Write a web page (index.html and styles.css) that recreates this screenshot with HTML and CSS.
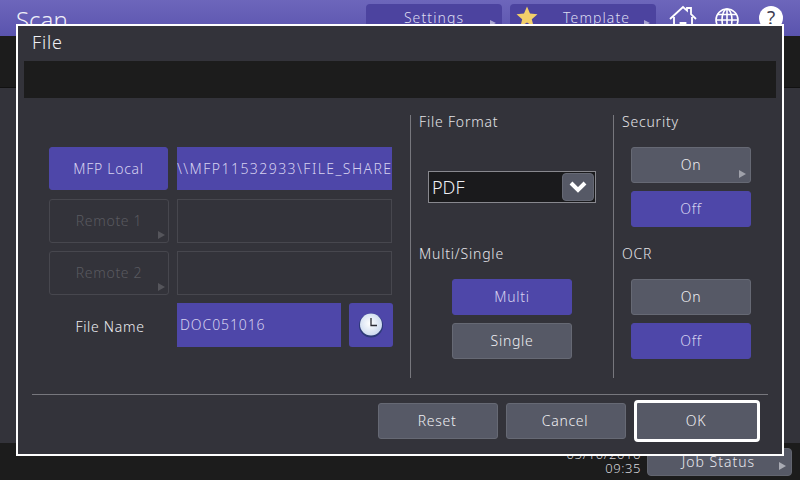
FILE: index.html
```html
<!DOCTYPE html>
<html lang="en">
<head>
<meta charset="utf-8">
<title>Scan - File</title>
<link rel="stylesheet" href="styles.css">
</head>
<body>
<div class="screen">
  <header class="topbar">
    <div class="app-title">Scan</div>
    <div class="top-actions">
      <div class="top-btn top-btn-settings">Settings</div>
      <div class="top-btn top-btn-template">
        <svg class="star" viewBox="0 0 24 24" width="24" height="24"><path d="M12 1.5l3 7 7.5.7-5.700 5 1.800 7.300L12 17.600 5.400 21.500l1.800-7.300-5.700-5 7.500-.7z" fill="#f2cf6a"/></svg>
        <span>Template</span>
      </div>
      <svg class="top-icon home" viewBox="0 0 30 30" width="30" height="30" fill="none" stroke="#fff" stroke-width="1.800"><path d="M2 15L15 3l4 3.600V4h4v6.200L28 15"/><path d="M6 13v14h6.500v-8h5v8H24V13"/></svg>
      <svg class="top-icon globe" viewBox="0 0 26 26" width="26" height="26" fill="none" stroke="#fff" stroke-width="1.600"><circle cx="13" cy="13" r="11"/><ellipse cx="13" cy="13" rx="5" ry="11"/><path d="M13 2v22M2 13h22M3.500 7.500h19M3.500 18.500h19"/></svg>
      <div class="help">?</div>
    </div>
  </header>
  <div class="band"></div>
  <main class="backdrop"></main>
  <footer class="bottombar">
    <div class="clock-text">05/10/2016<br>09:35</div>
    <div class="job-btn">Job Status</div>
  </footer>

  <section class="dialog">
    <h1 class="dialog-title">File</h1>
    <div class="message"></div>
    <div class="columns">
      <div class="col-dest">
        <div class="btn btn-on btn-row">MFP Local</div>
        <div class="field field-on path">\\MFP11532933\FILE_SHARE</div>
        <div class="btn btn-off btn-row arrow-dim">Remote 1</div>
        <div class="field field-empty"></div>
        <div class="btn btn-off btn-row arrow-dim">Remote 2</div>
        <div class="field field-empty"></div>
        <div class="name-label">File Name</div>
        <div class="name-group">
          <div class="field field-on name">DOC051016</div>
          <div class="clock-btn">
            <svg viewBox="0 0 26 26" width="26" height="26"><defs><radialGradient id="face" cx="45%" cy="45%" r="60%"><stop offset="0" stop-color="#ffffff"/><stop offset="1" stop-color="#c9d8ee"/></radialGradient></defs><circle cx="13" cy="13.500" r="12" fill="#2d3a78"/><circle cx="13" cy="12.500" r="11" fill="url(#face)"/><path d="M13 6v7.500h6" fill="none" stroke="#2a2b34" stroke-width="1.300"/></svg>
          </div>
        </div>
      </div>
      <div class="col-mid">
        <div class="group group-format">
          <div class="label">File Format</div>
          <div class="select">
            <span>PDF</span>
            <div class="select-btn">
              <svg viewBox="0 0 20 14" width="20" height="14" fill="none" stroke="#fff" stroke-width="4"><path d="M3 3l7 7 7-7"/></svg>
            </div>
          </div>
        </div>
        <div class="group">
          <div class="label">Multi/Single</div>
          <div class="stack">
            <div class="btn btn-on">Multi</div>
            <div class="btn btn-grey">Single</div>
          </div>
        </div>
      </div>
      <div class="col-right">
        <div class="group">
          <div class="label">Security</div>
          <div class="stack">
            <div class="btn btn-grey arrow">On</div>
            <div class="btn btn-on">Off</div>
          </div>
        </div>
        <div class="group">
          <div class="label">OCR</div>
          <div class="stack">
            <div class="btn btn-grey">On</div>
            <div class="btn btn-on">Off</div>
          </div>
        </div>
      </div>
    </div>
    <div class="dialog-footer">
      <div class="btn btn-grey">Reset</div>
      <div class="btn btn-grey">Cancel</div>
      <div class="btn btn-grey btn-ok">OK</div>
    </div>
  </section>
</div>
</body>
</html>
```

FILE: styles.css
```css
* { box-sizing: border-box; }
html, body { margin: 0; padding: 0; }
body {
  width: 800px;
  height: 480px;
  overflow: hidden;
  background: #1c1c1c;
  font-family: "Noto Sans", "Open Sans", sans-serif;
  font-weight: 300;
  color: #e8e8ee;
}
.screen {
  position: relative;
  width: 800px;
  height: 480px;
  overflow: hidden;
  display: flex;
  flex-direction: column;
}
.topbar {
  height: 36px;
  display: flex;
  justify-content: space-between;
  background: linear-gradient(#6d66bb, #5a54ae);
}
.app-title {
  margin: 3px 0 0 16px;
  font-size: 24px;
  line-height: 34px;
  font-weight: 300;
  color: #eeeef8;
}
.top-actions {
  display: flex;
  align-items: flex-start;
  padding-top: 4px;
  margin-right: 17px;
}
.top-btn {
  position: relative;
  height: 32px;
  border-radius: 4px;
  background: #4c439f;
  font-size: 14px;
  line-height: 28px;
  letter-spacing: 1.100px;
  color: #dcdcf0;
  text-align: center;
}
.top-btn::after {
  content: "";
  position: absolute;
  right: 6px;
  top: 16px;
  border-left: 6px solid #a9a6d2;
  border-top: 3.500px solid transparent;
  border-bottom: 3.500px solid transparent;
}
.top-btn-settings { width: 136px; margin-right: 8px; }
.top-btn-template {
  width: 146px;
  display: flex;
  padding-left: 5px;
  margin-right: 12px;
}
.top-btn-template span { margin-left: 24px; }
.star { margin-top: 1px; }
.top-icon { flex: none; }
.home { margin-top: 0; }
.globe { margin: 3px 0 0 16px; }
.help {
  width: 24px;
  height: 24px;
  margin: 2px 0 0 19px;
  border-radius: 50%;
  background: #fff;
  color: #3c3c50;
  font-size: 19px;
  font-weight: 400;
  line-height: 24px;
  text-align: center;
}
.band { height: 52px; background: #1c1c1c; border-bottom: 1px solid #111; }
.backdrop { flex: 1; background: #33333a; }
.bottombar {
  height: 37px;
  display: flex;
  justify-content: flex-end;
  background: #1c1c1c;
  padding: 5px 8px 0 0;
}
.clock-text {
  margin: -1px 6px 0 0;
  font-size: 13px;
  line-height: 14px;
  text-align: right;
  letter-spacing: .6px;
  color: #d8d8dc;
}
.job-btn {
  position: relative;
  width: 145px;
  height: 28px;
  border-radius: 4px;
  background: #565966;
  border: 1px solid #62656f;
  padding-right: 2px;
  font-size: 14px;
  line-height: 26px;
  letter-spacing: 1px;
  text-align: center;
  color: #e8e8ee;
}
.job-btn::after {
  content: "";
  position: absolute;
  right: 5px;
  top: 13px;
  border-left: 7px solid #a9abb4;
  border-top: 4px solid transparent;
  border-bottom: 4px solid transparent;
}

.dialog {
  position: absolute;
  left: 16px;
  top: 24px;
  width: 768px;
  height: 432px;
  border: 2px solid #fff;
  background: #33333a;
  display: flex;
  flex-direction: column;
}
.dialog-title {
  margin: 0;
  height: 35px;
  padding-left: 14px;
  font-size: 18px;
  line-height: 33px;
  font-weight: 300;
  letter-spacing: .8px;
  color: #f0f0f4;
}
.message {
  height: 37px;
  margin: 0 6px;
  background: #1c1c1c;
}
.columns {
  display: flex;
  height: 263px;
  margin-top: 17px;
}
.col-dest {
  width: 392px;
  padding: 32px 0 0 31px;
  display: grid;
  grid-template-columns: 119px 216px;
  grid-auto-rows: 44px;
  column-gap: 9px;
  row-gap: 8px;
  align-content: start;
}
.col-mid {
  width: 203px;
  border-left: 1px solid #77777d;
  padding-left: 8px;
}
.col-right {
  border-left: 1px solid #77777d;
  padding-left: 8px;
  flex: 1;
}
.group { height: 132px; }
.label {
  font-size: 14px;
  line-height: 14px;
  height: 12px;
  letter-spacing: .8px;
  color: #e4e4e8;
}
.stack {
  display: flex;
  flex-direction: column;
  gap: 8px;
  margin-top: 20px;
  margin-left: 9px;
}
.col-mid .stack { margin-left: 33px; }
.btn {
  position: relative;
  width: 120px;
  height: 36px;
  border-radius: 3px;
  font-size: 14px;
  line-height: 33px;
  letter-spacing: .7px;
  text-align: center;
  border: 1px solid transparent;
}
.btn-row { width: 119px; height: 43px; line-height: 41px; }
.btn-on { background: #4e47a9; border-color: #4e47a9; color: #d6d2f0; }
.btn-grey { background: #565966; border-color: #666974; color: #eeeef2; }
.btn-off { background: transparent; border-color: #47474e; color: #5a5a60; width: 120px; height: 44px; line-height: 42px; }
.arrow::after, .arrow-dim::after {
  content: "";
  position: absolute;
  right: 4px;
  bottom: 4px;
  border-left: 7px solid #9fa1aa;
  border-top: 4px solid transparent;
  border-bottom: 4px solid transparent;
}
.arrow-dim::after { border-left-color: #55555b; right: 3px; bottom: 3px; }
.field {
  font-size: 14px;
  letter-spacing: .9px;
  white-space: nowrap;
  overflow: hidden;
}
.field-on { background: #4e47a9; color: #d6d2f0; }
.path { height: 43px; width: 215px; line-height: 43px; letter-spacing: 1.450px; }
.field-empty { border: 1px solid #47474e; width: 215px; }
.name-label {
  font-size: 14px;
  line-height: 47px;
  text-align: center;
  padding-left: 3px;
  letter-spacing: .7px;
  color: #eeeef2;
}
.name-group { display: flex; gap: 8px; }
.name { width: 164px; padding-left: 3px; line-height: 44px; }
.clock-btn {
  width: 44px;
  height: 44px;
  border-radius: 3px;
  background: #4e47a9;
  display: flex;
  align-items: center;
  justify-content: center;
}
.group-format .select { margin-top: 44px; margin-left: 9px; }
.select {
  width: 168px;
  height: 32px;
  border: 1px solid #88888e;
  background: #1a1a1c;
  display: flex;
  justify-content: space-between;
  padding: 1px 1px 1px 3px;
  font-size: 18px;
  line-height: 28px;
  color: #f0f0f4;
}
.select-btn {
  width: 32px;
  height: 28px;
  border-radius: 4px;
  background: #565966;
  border: 1px solid #666974;
  display: flex;
  align-items: center;
  justify-content: center;
}
.dialog-footer {
  margin: 16px 14px 0;
  border-top: 1px solid #77777d;
  padding: 8px 8px 0 0;
  display: flex;
  justify-content: flex-end;
  align-items: flex-start;
  gap: 8px;
}
.dialog-footer .btn { padding-right: 2px; }
.btn-ok {
  width: 126px;
  height: 42px;
  line-height: 36px;
  border: 3px solid #fff;
  border-radius: 4px;
  margin-top: -3px;
}
```
